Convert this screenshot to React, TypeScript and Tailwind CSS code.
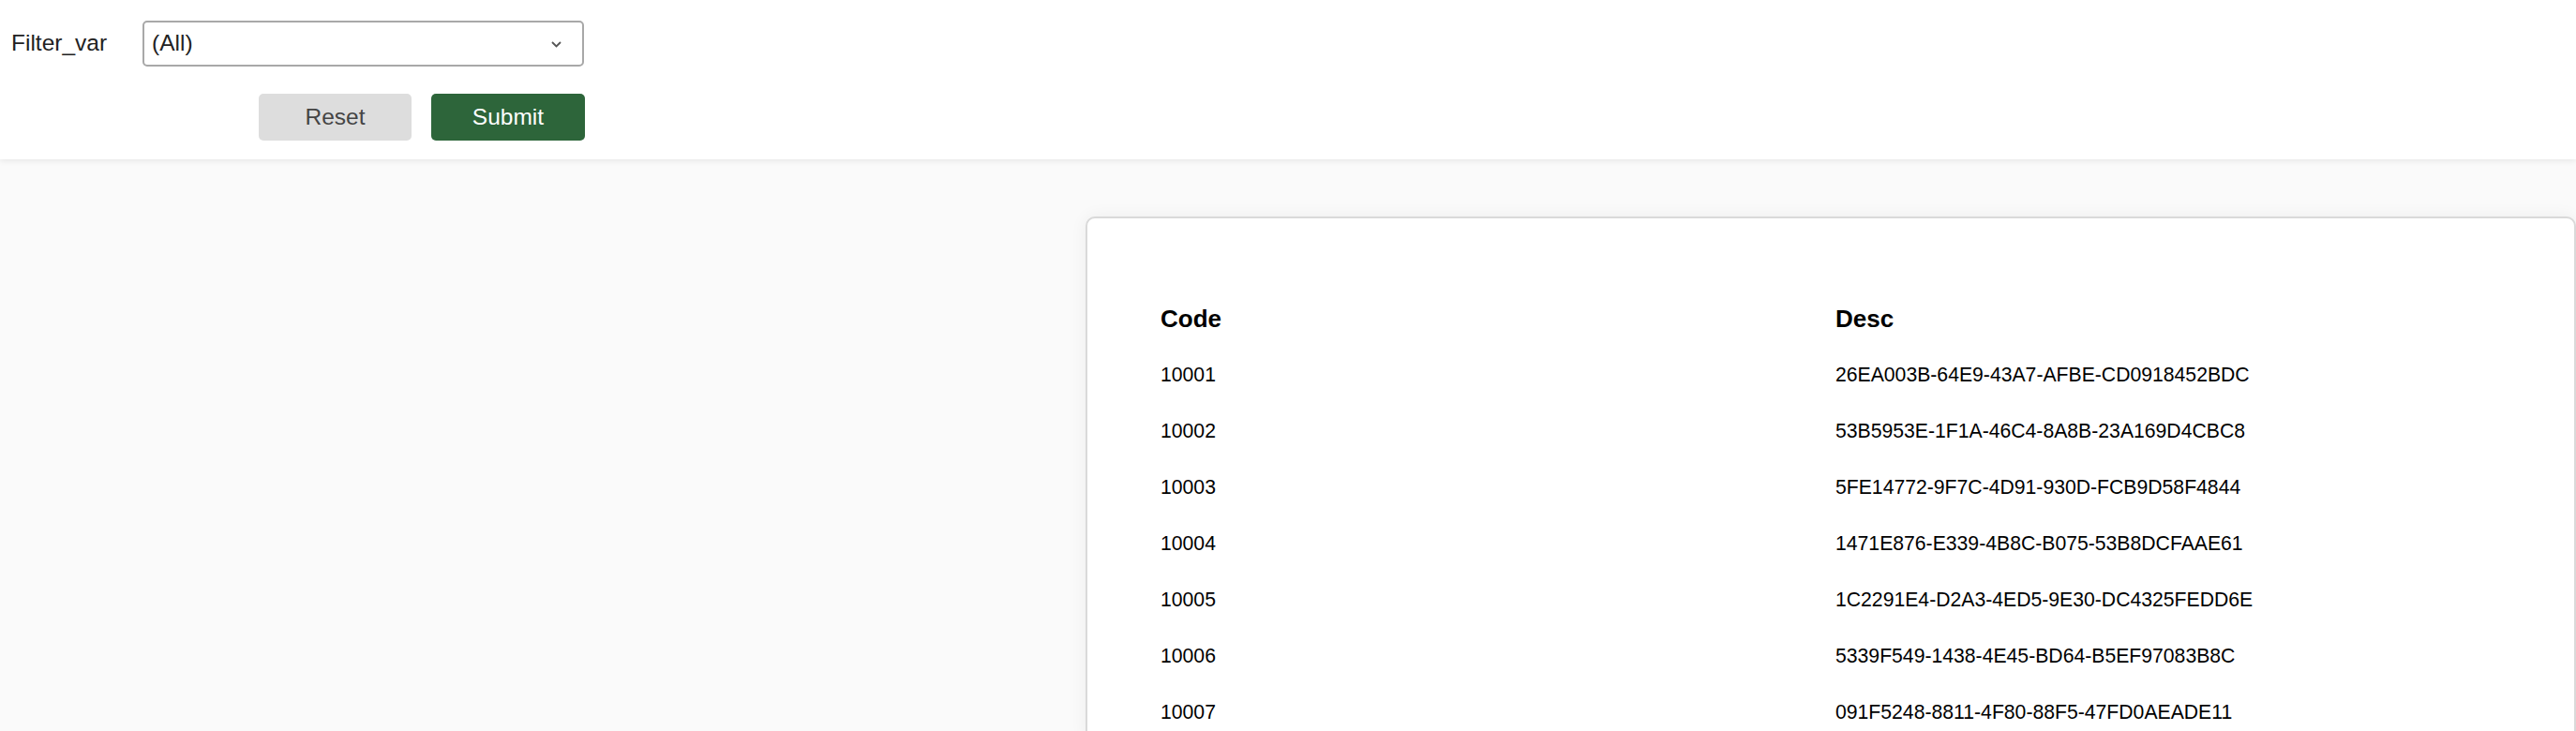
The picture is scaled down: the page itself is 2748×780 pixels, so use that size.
import React from "react";

const rows: [string, string][] = [
  ["10001", "26EA003B-64E9-43A7-AFBE-CD0918452BDC"],
  ["10002", "53B5953E-1F1A-46C4-8A8B-23A169D4CBC8"],
  ["10003", "5FE14772-9F7C-4D91-930D-FCB9D58F4844"],
  ["10004", "1471E876-E339-4B8C-B075-53B8DCFAAE61"],
  ["10005", "1C2291E4-D2A3-4ED5-9E30-DC4325FEDD6E"],
  ["10006", "5339F549-1438-4E45-BD64-B5EF97083B8C"],
  ["10007", "091F5248-8811-4F80-88F5-47FD0AEADE11"],
];

export default function App() {
  return (
    <div
      className="h-[780px] w-[2748px] overflow-hidden bg-[#fafafa] text-black"
      style={{ fontFamily: '"Liberation Sans", Arial, sans-serif' }}
    >
      <header className="relative z-10 h-[170px] bg-white pl-[12px] pt-[22px] shadow-[0_2px_6px_rgba(0,0,0,0.08)]">
        <div className="flex w-[612px] items-center">
          <label className="w-[140px] text-[24.5px] leading-none text-[#222]">Filter_var</label>
          <div className="flex h-[49px] w-[471px] items-center justify-between rounded-[5px] border-2 border-[#a8a8a8] bg-white pl-[8px] pr-[22px]">
            <span className="text-[24.5px] leading-none text-[#222]">(All)</span>
            <svg width="11" height="7" viewBox="0 0 11 7" className="mt-[2px]">
              <path d="M1 1 L5.5 5.5 L10 1" fill="none" stroke="#555" strokeWidth="1.8" />
            </svg>
          </div>
        </div>
        <div className="mt-[29px] flex w-[612px] justify-end gap-[21px]">
          <button className="h-[50px] w-[163px] rounded-[5px] bg-[#dddddd] text-[24.5px] leading-none text-[#444]">
            Reset
          </button>
          <button className="h-[50px] w-[164px] rounded-[5px] bg-[#2d653a] text-[24.5px] leading-none text-white">
            Submit
          </button>
        </div>
      </header>
      <main className="flex pt-[61px] pl-[1158px]">
        <section className="h-[560px] flex-1 rounded-[10px] border-2 border-[#d9d9d9] bg-white pl-[78px] pt-[77px] shadow-[0_0_18px_rgba(0,0,0,0.06)]">
          <div className="grid grid-cols-[720px_1fr]">
            <div className="h-[60px] text-[26px] font-bold leading-[60px]">Code</div>
            <div className="h-[60px] text-[26px] font-bold leading-[60px]">Desc</div>
            {rows.map(([c, d]) => (
              <React.Fragment key={c}>
                <div className="h-[60px] text-[21.2px] leading-[60px]">{c}</div>
                <div className="h-[60px] text-[21.2px] leading-[60px]">{d}</div>
              </React.Fragment>
            ))}
          </div>
        </section>
      </main>
    </div>
  );
}
